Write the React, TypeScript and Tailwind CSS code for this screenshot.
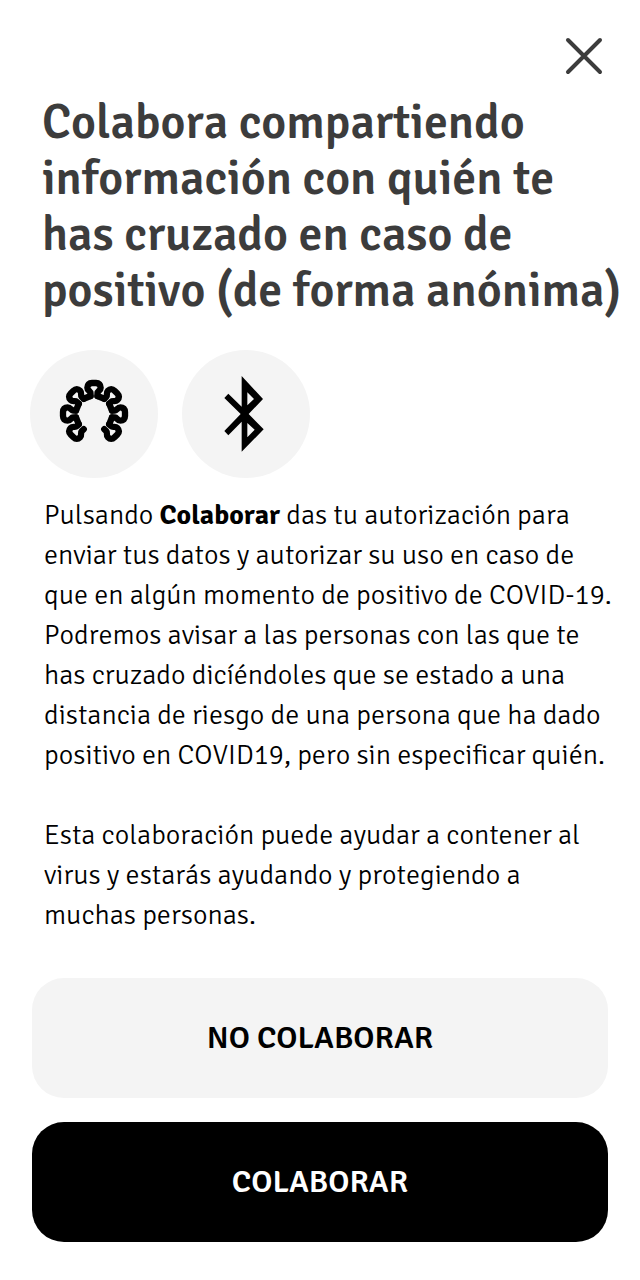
import type { ReactNode } from "react";

const lobes = [-135, -90, -45, 0, 45, 90, 135];

function VirusIcon() {
  return (
    <svg viewBox="-192 -192 384 384" className="size-32" fill="none" stroke="#000" strokeWidth="19" strokeLinecap="round" strokeLinejoin="round" aria-hidden="true">
      {lobes.map((angle, i) => (
        <g key={angle} transform={`rotate(${angle})`}>
          <path d="M-10.5 -54V-63C-10.5 -69 -20 -70 -20 -79C-20 -88 -15 -93 -6 -93H6C15 -93 20 -88 20 -79C20 -70 10.5 -69 10.5 -63V-54" />
          {i < lobes.length - 1 && <path d="M10.5 -54L30.8 -45.6" />}
        </g>
      ))}
    </svg>
  );
}

function BluetoothIcon() {
  return (
    <svg viewBox="36 30 384 384" className="size-32" aria-hidden="true">
      <path
        fillRule="evenodd"
        d="M215 108L279 177L236 222L281 268L215 335V245L175 286L163 273L212 222L163 174L175 161L215 200ZM232 157V196L252 177ZM232 249V292L254 269Z"
      />
    </svg>
  );
}

function Badge({ children }: { children: ReactNode }) {
  return <div className="size-32 rounded-full bg-[#f4f4f4]">{children}</div>;
}

function Line({ children }: { children: ReactNode }) {
  return <span className="block">{children} </span>;
}

export default function App() {
  return (
    <main className="flex min-h-screen flex-col bg-white px-8 pt-8 pb-8 font-['Signika_Negative','Signika','Lato',sans-serif] text-black [font-kerning:none] [font-variant-ligatures:none]">
      <button type="button" aria-label="Cerrar" className="self-end">
        <svg viewBox="0 0 48 48" className="size-12" stroke="#3c3c3c" strokeWidth="4" strokeLinecap="round" aria-hidden="true">
          <path d="M8 8L40 40M40 8L8 40" />
        </svg>
      </button>

      <h1 className="mt-[15px] -mr-8 pl-2.5 text-5xl leading-14 font-semibold text-[#3c3c3c]">
        <Line>Colabora compartiendo</Line>
        <Line>información con quién te</Line>
        <Line>has cruzado en caso de</Line>
        <Line>positivo (de forma anónima)</Line>
      </h1>

      <div className="-ml-0.5 mt-[31px] flex gap-6">
        <Badge><VirusIcon /></Badge>
        <Badge><BluetoothIcon /></Badge>
      </div>

      <div className="-mr-8 mt-[17px] flex flex-col gap-10 pl-3 text-[28px] leading-10 font-light">
        <p>
          <Line>Pulsando <strong className="font-bold">Colaborar</strong> das tu autorización para</Line>
          <Line>enviar tus datos y autorizar su uso en caso de</Line>
          <Line>que en algún momento de positivo de COVID-19.</Line>
          <Line>Podremos avisar a las personas con las que te</Line>
          <Line>has cruzado dicíéndoles que se estado a una</Line>
          <Line>distancia de riesgo de una persona que ha dado</Line>
          <Line>positivo en COVID19, pero sin especificar quién.</Line>
        </p>
        <p>
          <Line>Esta colaboración puede ayudar a contener al</Line>
          <Line>virus y estarás ayudando y protegiendo a</Line>
          <Line>muchas personas.</Line>
        </p>
      </div>

      <div className="mt-[43px] flex flex-col gap-6 text-[32px] font-semibold">
        <button type="button" className="h-30 rounded-4xl bg-[#f4f4f4]">NO COLABORAR</button>
        <button type="button" className="h-30 rounded-4xl bg-black text-white">COLABORAR</button>
      </div>
    </main>
  );
}
